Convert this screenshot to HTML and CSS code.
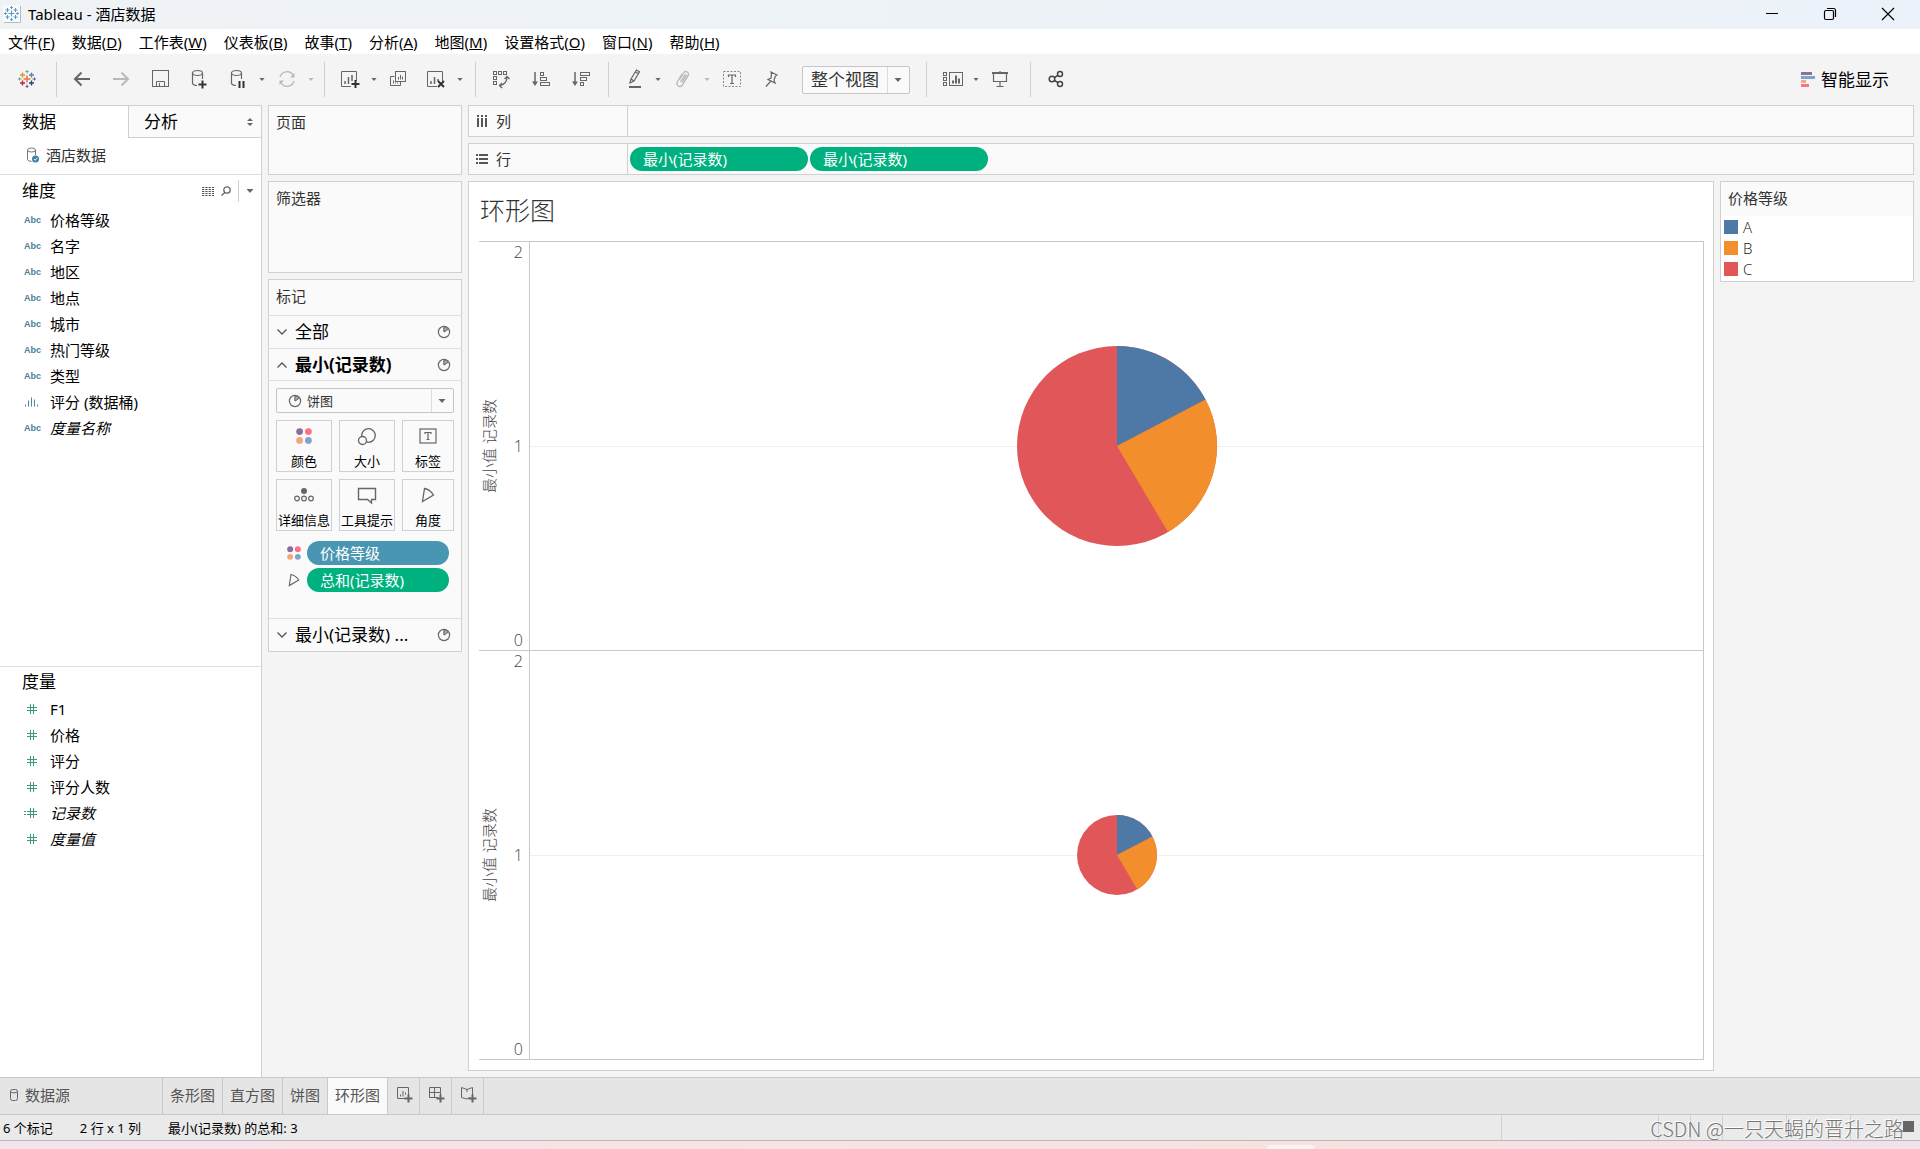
FILE: index.html
```html
<!DOCTYPE html>
<html lang="zh-CN">
<head>
<meta charset="utf-8">
<title>Tableau - 酒店数据</title>
<link rel="stylesheet" href="styles.css">
</head>
<body>
<svg class="sprite" aria-hidden="true">
  <symbol id="caret" viewBox="0 0 8 6"><path d="M0.5 1h7L4 5z" fill="currentColor"/></symbol>
  <symbol id="pie" viewBox="0 0 14 14"><circle cx="7" cy="7" r="5.6" fill="none" stroke="#666" stroke-width="1.2"/><path d="M7 7V2.4M7 7l3.8-2.6" fill="none" stroke="#666"/><path d="M7 7V2a5 5 0 0 1 4 2.3z" fill="#aaa" stroke="#666" stroke-width=".8"/></symbol>
  <symbol id="down" viewBox="0 0 12 8"><path d="M1.500 1.500l4.500 4.500 4.500-4.500" fill="none" stroke="#555" stroke-width="1.300"/></symbol>
  <symbol id="up" viewBox="0 0 12 8"><path d="M1.500 6.500l4.500-4.500 4.500 4.500" fill="none" stroke="#555" stroke-width="1.300"/></symbol>
  <symbol id="dots" viewBox="0 0 16 16"><circle cx="3.6" cy="3.6" r="3.4" fill="#8a6f9e"/><circle cx="12.4" cy="3.6" r="3.4" fill="#fb7185"/><circle cx="3.6" cy="12.4" r="3.4" fill="#f5a67c"/><circle cx="12.4" cy="12.4" r="3.4" fill="#7fa3cc"/></symbol>
  <symbol id="angle" viewBox="0 0 14 16"><path d="M3.5 1.5L1.5 14.5 12.5 8Q9 2.5 3.5 1.5z" fill="none" stroke="#666" stroke-width="1.3"/></symbol>
  <symbol id="hash" viewBox="0 0 16 12"><path d="M6.5 1v10M9.500 1v10M3 4.500h10M3 7.500h10" stroke="#3a9c78" fill="none"/></symbol>
  <symbol id="hasheq" viewBox="-2 0 16 12"><path d="M4.500 1v10M7.500 1v10M1 4.500h10M1 7.500h10M-2 4.500h2M-2 7.500h2" stroke="#3a9c78" fill="none"/></symbol>
</svg>

<header class="titlebar">
  <svg class="app-icon" width="18" height="18" viewBox="0 0 18 18"><rect width="17" height="17" fill="#f8fbfd"/><path d="M17.500 1v16.500H1" fill="none" stroke="#bbb"/><path d="M8.500 5.500v6M5.500 8.500h6M4.500 3v4M2.500 5h4M12.500 3v4M10.500 5h4M4.500 10v4M2.500 12h4M12.500 10v4M10.500 12h4M8.500 1v3M7.200 2.500h2.600M8.500 13v3M7.200 14.500h2.600M1 8.500h3M13 8.500h3M2.500 7.300v2.400M14.500 7.300v2.400" stroke="#5b96bb" fill="none"/></svg>
  <h1 class="app-title">Tableau - 酒店数据</h1>
  <div class="window-buttons">
    <button aria-label="最小化"><svg width="14" height="14"><path d="M1 6.500h12" stroke="#000"/></svg></button>
    <button aria-label="还原"><svg width="14" height="14"><rect x="1.500" y="3.500" width="9" height="9" rx="1.500" fill="none" stroke="#000" stroke-width="1.200"/><path d="M4 1.500h6.500a2 2 0 0 1 2 2V10" fill="none" stroke="#000" stroke-width="1.200"/></svg></button>
    <button aria-label="关闭"><svg width="14" height="14"><path d="M1 1l12 12M13 1L1 13" stroke="#000" stroke-width="1.200"/></svg></button>
  </div>
</header>

<nav class="menubar">
  <button>文件(<u>F</u>)</button><button>数据(<u>D</u>)</button><button>工作表(<u>W</u>)</button><button>仪表板(<u>B</u>)</button><button>故事(<u>T</u>)</button><button>分析(<u>A</u>)</button><button>地图(<u>M</u>)</button><button>设置格式(<u>O</u>)</button><button>窗口(<u>N</u>)</button><button>帮助(<u>H</u>)</button>
</nav>

<div class="toolbar">
  <div class="group group-logo">
    <button class="tool" aria-label="起始页"><svg width="20" height="20" viewBox="0 0 20 20" fill="none"><path d="M10 6.500v7M6.500 10h7" stroke="#e8762d" stroke-width="1.500"/><path d="M5.500 3.500v5M3 6h5" stroke="#eb912c" stroke-width="1.400"/><path d="M14.500 3.500v5M12 6h5" stroke="#5b879b" stroke-width="1.400"/><path d="M5.500 11.500v5M3 14h5" stroke="#c72035" stroke-width="1.400"/><path d="M14.500 11.500v5M12 14h5" stroke="#1f447e" stroke-width="1.400"/><path d="M10 1v3.500M8.500 2.500h3M1 10h3.500M2.500 8.500v3" stroke="#7099a6"/><path d="M10 15.500V19M8.500 17.500h3M15.500 10H19M17.500 8.500v3" stroke="#59659e"/></svg></button>
  </div>
  <div class="group group-file">
    <button class="tool" aria-label="撤消"><svg width="18" height="16" fill="none" stroke="#666" stroke-width="2"><path d="M17 8H2M8.500 1.500L2 8l6.500 6.500"/></svg></button>
    <button class="tool" aria-label="重做"><svg width="18" height="16" fill="none" stroke="#b9b9b9" stroke-width="2"><path d="M1 8h15M9.500 1.500L16 8l-6.500 6.500"/></svg></button>
    <button class="tool" aria-label="保存"><svg width="17" height="17" fill="none" stroke="#666"><rect x=".5" y=".5" width="16" height="16"/><path d="M4.500 16.500v-5h8v5M7.500 13v3.500"/></svg></button>
    <button class="tool" aria-label="新建数据源"><svg width="16" height="20" fill="none" stroke="#666" stroke-width="1.200"><ellipse cx="6.500" cy="4" rx="5" ry="2.500"/><path d="M1.500 4v10.500q1 2 4.500 2M11.500 4v6"/><path d="M11.500 11.500v8M7.500 15.500h8" stroke="#333" stroke-width="2"/></svg></button>
    <div class="split"><button class="tool" aria-label="暂停自动更新"><svg width="16" height="20" fill="none" stroke="#666" stroke-width="1.200"><ellipse cx="6.500" cy="4" rx="5" ry="2.500"/><path d="M1.500 4v10.500q1 2 4.500 2M11.500 4v6"/><path d="M9.500 12v7M13.500 12v7" stroke="#333" stroke-width="2"/></svg></button><button class="arrow" aria-label="更多"><svg width="6" height="5"><use href="#caret"/></svg></button></div>
    <div class="split dim"><button class="tool" aria-label="运行更新"><svg width="18" height="18" fill="none" stroke="#b9b9b9" stroke-width="1.300"><path d="M2 7A7.200 7.200 0 0 1 15 5M16 11A7.200 7.200 0 0 1 3 13"/><path d="M16.500 3v4.500H12zM1.500 15v-4.500H6z" fill="#b9b9b9" stroke="none"/></svg></button><button class="arrow" aria-label="更多"><svg width="6" height="5"><use href="#caret"/></svg></button></div>
  </div>
  <div class="group group-sheet">
    <div class="split"><button class="tool" aria-label="新建工作表"><svg width="20" height="18" fill="none" stroke="#666"><path d="M11 16.500H1.500V1.500h15V11"/><path d="M5 14v-3M8.500 14V7M12 11V5" stroke-width="1.500"/><path d="M15.500 10v8M11.500 14h8" stroke="#333" stroke-width="2"/></svg></button><button class="arrow" aria-label="更多"><svg width="6" height="5"><use href="#caret"/></svg></button></div>
    <button class="tool" aria-label="复制"><svg width="18" height="18" fill="none" stroke="#666"><path d="M5.500 6.500h-4v9h10v-4"/><rect x="6.500" y="1.500" width="10" height="10"/><path d="M9.500 9.500V7M11.500 9.500V5M13.500 9.500V6.500M4.500 13.500v-3M6.500 13.500v-1M8.500 13.500v-1"/></svg></button>
    <div class="split"><button class="tool" aria-label="清除工作表"><svg width="20" height="18" fill="none" stroke="#666"><path d="M11 16.500H1.500V1.500h15V11"/><path d="M5 14v-3M8.500 14V7M12 11V9" stroke-width="1.500"/><path d="M12 11l6 6M18 11l-6 6" stroke="#333" stroke-width="2"/></svg></button><button class="arrow" aria-label="更多"><svg width="6" height="5"><use href="#caret"/></svg></button></div>
  </div>
  <div class="group group-sort">
    <button class="tool" aria-label="交换行和列"><svg width="18" height="18" fill="none" stroke="#666"><rect x="1.500" y="1.500" width="3" height="3"/><rect x="6.500" y="1.500" width="3" height="3"/><rect x="11.500" y="1.500" width="3" height="3"/><rect x="1.500" y="6.500" width="3" height="3"/><rect x="1.500" y="11.500" width="3" height="3"/><path d="M15 7q0 7-7 8.500" stroke-width="1.300"/><path d="M12.500 9L15 6.500 17.500 9M10 13l-2.500 2.500L10 18" stroke-width="1.300"/></svg></button>
    <button class="tool" aria-label="升序排序"><svg width="18" height="16" fill="none" stroke="#666"><path d="M3 1v11" stroke-width="1.500"/><path d="M0 10.500h6L3 15z" fill="#666" stroke="none"/><rect x="8.500" y="1.500" width="3" height="3"/><rect x="8.500" y="6.500" width="6" height="3"/><rect x="8.500" y="11.500" width="9" height="3"/></svg></button>
    <button class="tool" aria-label="降序排序"><svg width="18" height="16" fill="none" stroke="#666"><path d="M3 1v11" stroke-width="1.500"/><path d="M0 10.500h6L3 15z" fill="#666" stroke="none"/><rect x="8.500" y="1.500" width="9" height="3"/><rect x="8.500" y="6.500" width="6" height="3"/><rect x="8.500" y="11.500" width="3" height="3"/></svg></button>
  </div>
  <div class="group group-view">
    <div class="split"><button class="tool" aria-label="突出显示"><svg width="16" height="20" fill="none" stroke="#666" stroke-width="1.200"><path d="M4 14l1-4 5.500-9 3 1.800L8 12zM5 10l3 2M9.500 3l3 1.800"/><path d="M3 18h12" stroke-width="2"/></svg></button><button class="arrow" aria-label="更多"><svg width="6" height="5"><use href="#caret"/></svg></button></div>
    <div class="split dim"><button class="tool" aria-label="组成员"><svg width="16" height="18" fill="none" stroke="#b9b9b9" stroke-width="1.300"><path d="M4.500 9.500L8.500 3a2.600 2.600 0 0 1 4.600 2.700L7 15.500a3 3 0 0 1-5-3L7 4M5.500 12l4-6.500q1-1.200 1.800 0L7 12.500"/></svg></button><button class="arrow" aria-label="更多"><svg width="6" height="5"><use href="#caret"/></svg></button></div>
    <button class="tool" aria-label="显示标记标签"><svg width="18" height="16" fill="none" stroke="#888"><rect x=".5" y=".5" width="17" height="15" stroke-dasharray="2 1.500"/><path d="M5.500 6V4h7v2M9 4v8.500M7 12.500h4" stroke="#666" stroke-width="1.200"/></svg></button>
    <button class="tool" aria-label="固定轴"><svg width="14" height="16" fill="none" stroke="#666" stroke-width="1.200"><path d="M7 1l6 3-1.500 1L10 9l1 3-7-3.500 3-1.500L7.500 3zM6.500 10.500L2 15.500"/></svg></button>
    <div class="combo combo-fit"><select aria-label="适合"><option>整个视图</option></select><svg width="8" height="6"><use href="#caret"/></svg></div>
  </div>
  <div class="group group-cards">
    <div class="split"><button class="tool" aria-label="显示/隐藏卡"><svg width="21" height="16" fill="none" stroke="#666"><rect x="1.500" y="1.500" width="3" height="3"/><rect x="1.500" y="6.500" width="3" height="3"/><rect x="1.500" y="11.500" width="3" height="3"/><rect x="7.500" y="1.500" width="13" height="13"/><path d="M11 12.500V9.500M14 12.500V4.500M17 12.500v-5" stroke-width="2"/></svg></button><button class="arrow" aria-label="更多"><svg width="6" height="5"><use href="#caret"/></svg></button></div>
    <button class="tool" aria-label="演示模式"><svg width="18" height="18" fill="none" stroke="#666"><path d="M1 3h16" stroke-width="2"/><path d="M2.500 3v8.500h13V3M9 1v1M9 11.500v5M5.500 16.500h7" stroke-width="1.200"/></svg></button>
  </div>
  <div class="group">
    <button class="tool" aria-label="共享"><svg width="16" height="18" fill="none" stroke="#444" stroke-width="1.500"><circle cx="4" cy="9" r="2.800"/><circle cx="12" cy="4" r="2.500"/><circle cx="12" cy="14" r="2.500"/><path d="M6.500 7.500L10 5.300M6.500 10.500L10 12.700"/></svg></button>
  </div>
  <button class="show-me"><svg width="14" height="16"><path d="M0 1.500h11" stroke="#8a739b" stroke-width="3"/><path d="M0 5.500h14" stroke="#7fa3cc" stroke-width="3"/><path d="M0 9.500h5" stroke="#f5a67c" stroke-width="3"/><path d="M0 13.500h8" stroke="#fb7185" stroke-width="3"/></svg>智能显示</button>
</div>

<main class="workspace">
  <aside class="sidebar">
    <div class="side-tabs"><button class="side-tab active">数据</button><button class="side-tab">分析<svg width="6" height="10"><path d="M0 4l3-3 3 3zM0 6l3 3 3-3z" fill="#666"/></svg></button></div>
    <button class="source"><svg width="13" height="16" fill="none" stroke="#777"><path d="M1.500 3v9.500q1 2 4 2M9.500 3v5"/><ellipse cx="5.500" cy="3" rx="4" ry="2"/><circle cx="9.500" cy="12" r="3.500" fill="#3d7fa6" stroke="none"/><path d="M7.800 12l1.400 1.400 2-2.600" stroke="#fff"/></svg>酒店数据</button>
    <div class="fields">
      <section class="field-pane">
        <header class="pane-head"><h2>维度</h2>
          <div class="pane-tools"><button aria-label="视图"><svg width="12" height="9" stroke="#555"><path d="M0 .5h12M0 2.500h12M0 4.500h12M0 6.500h12M0 8.500h12" stroke-dasharray="2.300 1"/></svg></button><button aria-label="查找"><svg width="10" height="10" fill="none" stroke="#666" stroke-width="1.300"><circle cx="6" cy="4" r="3.200"/><path d="M4 6.500L.5 9.500"/></svg></button><button class="pane-menu" aria-label="菜单"><svg width="8" height="6"><use href="#caret"/></svg></button></div>
        </header>
        <ul class="field-list">
          <li><span class="abc">Abc</span>价格等级</li>
          <li><span class="abc">Abc</span>名字</li>
          <li><span class="abc">Abc</span>地区</li>
          <li><span class="abc">Abc</span>地点</li>
          <li><span class="abc">Abc</span>城市</li>
          <li><span class="abc">Abc</span>热门等级</li>
          <li><span class="abc">Abc</span>类型</li>
          <li><svg width="16" height="10" stroke="#4a87a3"><path d="M1.500 7.500v2M4.500 3.500v6M7.500 .5v9M10.500 2.500v7M13.500 7.500v2"/></svg>评分 (数据桶)</li>
          <li class="generated"><span class="abc">Abc</span>度量名称</li>
        </ul>
      </section>
      <section class="field-pane measures">
        <header class="pane-head"><h2>度量</h2></header>
        <ul class="field-list">
          <li><svg width="16" height="12"><use href="#hash"/></svg>F1</li>
          <li><svg width="16" height="12"><use href="#hash"/></svg>价格</li>
          <li><svg width="16" height="12"><use href="#hash"/></svg>评分</li>
          <li><svg width="16" height="12"><use href="#hash"/></svg>评分人数</li>
          <li class="generated"><svg width="16" height="12"><use href="#hasheq"/></svg>记录数</li>
          <li class="generated"><svg width="16" height="12"><use href="#hash"/></svg>度量值</li>
        </ul>
      </section>
    </div>
  </aside>

  <div class="cards">
    <section class="card card-pages"><h2>页面</h2></section>
    <section class="card card-filters"><h2>筛选器</h2></section>
    <section class="card card-marks">
      <h2>标记</h2>
      <button class="mark-row"><svg width="12" height="8"><use href="#down"/></svg><span>全部</span><svg width="14" height="14"><use href="#pie"/></svg></button>
      <button class="mark-row current"><svg width="12" height="8"><use href="#up"/></svg><span>最小(记录数)</span><svg width="14" height="14"><use href="#pie"/></svg></button>
      <div class="mark-body">
        <div class="combo combo-type"><svg class="combo-icon" width="14" height="14"><use href="#pie"/></svg><select aria-label="标记类型"><option>饼图</option></select><svg width="8" height="6"><use href="#caret"/></svg></div>
        <div class="mark-grid">
          <button><svg width="16" height="16"><use href="#dots"/></svg>颜色</button>
          <button><svg width="20" height="18" fill="none" stroke="#666" stroke-width="1.300"><circle cx="11.500" cy="7.500" r="6.800"/><circle cx="5.500" cy="12.500" r="4" fill="#fafafa"/></svg>大小</button>
          <button><svg width="18" height="16" fill="none" stroke="#666" stroke-width="1.200"><rect x="1" y="1" width="16" height="14"/><path d="M6 6V4.500h6V6M9 4.500v7M7.500 11.500h3"/></svg>标签</button>
          <button><svg width="20" height="16" fill="none" stroke="#666" stroke-width="1.200"><circle cx="10" cy="4" r="3" fill="#666" stroke="none"/><circle cx="3" cy="11.500" r="2.300"/><circle cx="10" cy="11.500" r="2.300"/><circle cx="17" cy="11.500" r="2.300"/></svg>详细信息</button>
          <button><svg width="20" height="18" fill="none" stroke="#666" stroke-width="1.400"><path d="M1.500 1.500h17v11h-4v3.500l-4-3.500h-9z"/></svg>工具提示</button>
          <button><svg width="14" height="16"><use href="#angle"/></svg>角度</button>
        </div>
        <div class="encodings">
          <div class="encoding"><svg width="14" height="14"><use href="#dots"/></svg><button class="pill blue">价格等级</button></div>
          <div class="encoding"><svg width="12" height="14"><use href="#angle"/></svg><button class="pill">总和(记录数)</button></div>
        </div>
      </div>
      <button class="mark-row last"><svg width="12" height="8"><use href="#down"/></svg><span>最小(记录数) ...</span><svg width="14" height="14"><use href="#pie"/></svg></button>
    </section>
  </div>

  <div class="stage">
    <div class="shelf"><div class="shelf-name"><svg width="12" height="12" stroke="#555" stroke-width="2"><path d="M2 0v2M2 3v9M6 0v2M6 3v9M10 0v2M10 3v9"/></svg>列</div></div>
    <div class="shelf"><div class="shelf-name"><svg width="12" height="12" stroke="#555" stroke-width="2"><path d="M0 2h2M3 2h9M0 6h2M3 6h9M0 10h2M3 10h9"/></svg>行</div><button class="pill">最小(记录数)</button><button class="pill">最小(记录数)</button></div>
    <div class="view">
      <section class="canvas">
        <h2 class="sheet-title">环形图</h2>
        <div class="chart">
          <div class="band">
            <div class="axis"><span class="axis-title">最小值 记录数</span><div class="ticks"><span>2</span><span>1</span><span>0</span></div></div>
            <div class="plot"><svg width="200" height="200" viewBox="-100 -100 200 200"><circle r="100" fill="#e15759"/><path d="M0 0V-100A100 100 0 0 1 88.500 -46.500z" fill="#4e79a7"/><path d="M0 0L88.500 -46.500A100 100 0 0 1 51 86z" fill="#f28e2b"/></svg></div>
          </div>
          <div class="band">
            <div class="axis"><span class="axis-title">最小值 记录数</span><div class="ticks"><span>2</span><span>1</span><span>0</span></div></div>
            <div class="plot"><svg width="80" height="80" viewBox="-100 -100 200 200"><circle r="100" fill="#e15759"/><path d="M0 0V-100A100 100 0 0 1 88.500 -46.500z" fill="#4e79a7"/><path d="M0 0L88.500 -46.500A100 100 0 0 1 51 86z" fill="#f28e2b"/></svg></div>
          </div>
        </div>
      </section>
      <aside class="legend">
        <h2>价格等级</h2>
        <ul><li><i class="swatch a"></i>A</li><li><i class="swatch b"></i>B</li><li><i class="swatch c"></i>C</li></ul>
      </aside>
    </div>
  </div>
</main>

<nav class="sheet-tabs">
  <button class="data-source"><svg width="8" height="12" fill="none" stroke="#666"><rect x=".5" y=".5" width="7" height="11" rx="2"/><path d="M.5 3q3.500 2 7 0"/></svg>数据源</button>
  <button>条形图</button><button>直方图</button><button>饼图</button><button class="active">环形图</button>
  <button class="add" aria-label="新建工作表"><svg width="16" height="16" fill="none" stroke="#666"><path d="M9 11.500H.5V.5h11V8M3.500 9.500v-2M6 9.500V4M8.500 7.500v-2"/><path d="M11.500 7.500v8M7.500 11.500h8" stroke-width="2"/></svg></button>
  <button class="add" aria-label="新建仪表板"><svg width="16" height="16" fill="none" stroke="#666"><path d="M9 10.500H.5V.5h11V8M5.500 .5v10M.5 5.500h11"/><path d="M11.500 7.500v8M7.500 11.500h8" stroke-width="2"/></svg></button>
  <button class="add" aria-label="新建故事"><svg width="16" height="16" fill="none" stroke="#666"><path d="M9 10.500L6 12 .5 10.500V.5L6 2.500l5.500-2V8M6 2.500V5"/><path d="M11.500 7.500v8M7.500 11.500h8" stroke-width="2"/></svg></button>
</nav>
<footer class="status">
  <span class="marks-count">6 个标记</span><span class="size-count">2 行 x 1 列</span><span class="sum">最小(记录数) 的总和: 3</span>
  <div class="status-cells"><i class="cell-wide"></i><i></i><i></i><i class="cell-mid"></i><i class="cell-mid"></i><i class="cell-end"></i></div>
  <span class="watermark">CSDN @一只天蝎的晋升之路</span>
  <b class="view-square"></b>
</footer>
<div class="desktop-edge"><i></i></div>
</body>
</html>
```
FILE: styles.css
```css
* { box-sizing: border-box; margin: 0; padding: 0; }

body {
  min-height: 100vh;
  display: flex;
  flex-direction: column;
  font: 15px/20px "Noto Sans", "Noto Sans CJK SC", sans-serif;
  color: #000;
  background: #f4f4f4;
}

button, select { font: inherit; color: inherit; background: none; border: 0; white-space: nowrap; }
h1, h2 { font-size: 15px; font-weight: 400; }
ul { list-style: none; }
svg { flex: none; display: block; overflow: visible; }
.sprite { position: absolute; width: 0; height: 0; }

/* Window frame */
.titlebar { height: 29px; display: flex; align-items: center; padding: 0 8px 2px 3px; background: linear-gradient(90deg, #eff3f6, #ecf2f9); }
.app-title { margin-left: 7px; flex: 1; }
.window-buttons { display: flex; }
.window-buttons button { width: 58px; height: 27px; display: grid; place-items: center; }
.window-buttons button:last-child { margin-right: -5px; }

.menubar { height: 25px; display: flex; align-items: center; gap: 17px; padding-left: 8px; background: #fff; }

/* Toolbar */
.toolbar { height: 51px; display: flex; align-items: center; padding-right: 31px; }
.group { height: 35px; display: flex; align-items: center; gap: 14px; padding-left: 13px; border-left: 1px solid #d0d0d0; color: #666; }
.group-logo { border: 0; padding-left: 15px; flex: 0 0 56px; }
.group-file { gap: 15px; flex: 0 0 268px; }
.group-sheet { flex: 0 0 151px; }
.group-sort { gap: 16px; flex: 0 0 133px; }
.group-view { gap: 15px; flex: 0 0 318px; }
.group-cards { flex: 0 0 104px; }
.tool { width: 24px; height: 28px; display: flex; align-items: center; justify-content: center; padding-bottom: 2px; }
.split { display: flex; align-items: center; gap: 8px; margin-right: -6px; }
.arrow { width: 8px; display: flex; justify-content: center; }
.dim { color: #b9b9b9; }
.show-me { margin-left: auto; display: flex; align-items: center; gap: 6px; font-size: 17px; }

.combo { display: grid; align-items: center; border: 1px solid #c6c6c6; border-radius: 2px; color: #666; background: #fafafa; }
.combo select { grid-area: 1 / 1 / 2 / 3; appearance: none; width: 100%; color: #333; }
.combo > svg:last-child { grid-area: 1 / 2; justify-self: center; pointer-events: none; }
.combo::after { content: ""; grid-area: 1 / 2; height: 100%; border-left: 1px solid #dcdcdc; pointer-events: none; }
.combo-fit { width: 108px; height: 28px; margin-left: 4px; grid-template: 26px / 84px 22px; }
.combo-fit select { height: 26px; padding-left: 8px; font-size: 17px; }
.combo-type { height: 25px; grid-template: 23px / 1fr 22px; }
.combo-type select { height: 23px; padding-left: 30px; font-size: 13px; }
.combo-icon { grid-area: 1 / 1; margin-left: 11px; }

/* Workspace columns */
.workspace { flex: 1; display: flex; gap: 6px; padding-right: 6px; }

.sidebar { flex: 0 0 262px; display: flex; flex-direction: column; background: #fff; border: solid #d0d0d0; border-width: 1px 1px 0 0; }
.side-tabs { height: 32px; display: flex; }
.side-tab { flex: 1; display: flex; align-items: center; justify-content: space-between; padding: 0 8px 0 15px; font-size: 17px; background: #fafafa; border: solid #d0d0d0; border-width: 0 0 1px 1px; }
.side-tab.active { flex: 0 0 128px; padding-left: 22px; background: #fff; border: 0; }
.source { height: 37px; display: flex; align-items: center; gap: 7px; padding: 0 0 2px 26px; color: #333; border-bottom: 1px solid #e0e0e0; }
.fields { flex: 1; display: grid; grid-template-rows: 49fr 41fr; }
.measures { border-top: 1px solid #e0e0e0; }
.pane-head { height: 32px; display: flex; align-items: center; justify-content: space-between; padding-left: 22px; }
.measures .pane-head { height: 29px; }
.pane-head h2 { font-size: 17px; }
.pane-tools { display: flex; align-items: center; color: #666; gap: 7px; }
.pane-menu { height: 22px; width: 23px; display: grid; place-items: center; border-left: 1px solid #d0d0d0; }
.field-list li { height: 26px; display: flex; align-items: center; gap: 10px; padding-left: 24px; }
.abc { width: 16px; font: bold 9px/12px "Liberation Sans", sans-serif; color: #4a7f96; }
.generated { font-style: italic; }
.generated .abc { font-style: normal; }

/* Cards */
.cards { flex: 0 0 194px; display: flex; flex-direction: column; gap: 6px; }
.card, .shelf, .canvas, .legend { border: 1px solid #d0d0d0; background: #fafafa; }
.card h2 { height: 35px; padding: 6px 7px; color: #333; }
.card-pages { height: 70px; }
.card-filters { height: 92px; }
.mark-row { width: 100%; height: 33px; display: flex; align-items: center; padding: 0 10px 0 7px; border-top: 1px solid #e0e0e0; font-size: 17px; text-align: left; }
.mark-row span { flex: 1; padding-left: 7px; }
.mark-row.current { height: 32px; font-weight: 700; }
.mark-body { border-top: 1px solid #e0e0e0; padding: 7px; }
.mark-grid { display: grid; grid-template: 52px 52px / 56px 56px 52px; gap: 7px; margin-top: 7px; }
.mark-grid button { display: flex; flex-direction: column; align-items: center; justify-content: space-between; padding-top: 7px; font-size: 13px; border: 1px solid #d0d0d0; }
.encodings { display: grid; gap: 3px; padding: 10px 5px 19px 10px; }
.encoding { display: grid; grid-template-columns: 16px 142px; justify-content: space-between; align-items: center; justify-items: center; }

.pill { width: 100%; height: 24px; padding: 0 13px; border-radius: 12px; background: #00b180; color: #fff; text-align: left; }
.pill.blue { background: #4996b2; }

/* Shelves and view */
.stage { flex: 1; min-width: 0; display: flex; flex-direction: column; gap: 6px; padding-bottom: 6px; }
.shelf { height: 32px; display: flex; align-items: center; gap: 2px; }
.shelf .pill { width: 178px; }
.shelf-name { width: 159px; height: 30px; display: flex; align-items: center; gap: 8px; padding-left: 7px; color: #333; border-right: 1px solid #d0d0d0; }
.view { flex: 1; display: flex; align-items: flex-start; gap: 6px; }
.canvas { flex: 1; align-self: stretch; display: flex; flex-direction: column; padding: 0 9px 10px 10px; background: #fff; }
.sheet-title { height: 59px; padding: 13px 1px; font: 300 25px/28px "Noto Sans CJK SC", sans-serif; color: #333; }
.chart { flex: 1; display: flex; flex-direction: column; border-top: 1px solid #c8c8c8; }
.band { flex: 1; display: flex; border-bottom: 1px solid #c8c8c8; }
.axis { flex: 0 0 50px; display: flex; align-items: center; justify-content: space-between; padding-right: 6px; }
.axis-title { writing-mode: vertical-rl; text-orientation: sideways; transform: rotate(180deg); font-weight: 300; color: #444; }
.ticks { align-self: stretch; display: flex; flex-direction: column; justify-content: space-between; font: 300 16px/20px "Open Sans", sans-serif; color: #444; }
.plot { flex: 1; display: grid; place-items: center; border: solid #c8c8c8; border-width: 0 1px; background: linear-gradient(#f0f0f0, #f0f0f0) center / 100% 1px no-repeat; }
.legend { flex: 0 0 194px; background: #fff; }
.legend h2 { height: 34px; padding: 6px 7px; color: #333; background: #fafafa; }
.legend ul { padding-bottom: 2px; }
.legend li { height: 21px; display: flex; align-items: center; gap: 5px; padding-left: 3px; font: 300 15px/20px "Open Sans", sans-serif; color: #111; }
.swatch { width: 14px; height: 14px; }
.a { background: #4e79a7; }
.b { background: #f28e2b; }
.c { background: #e15759; }

/* Sheet tabs and status */
.sheet-tabs { height: 37px; display: flex; background: #e5e5e5; border-top: 1px solid #c8c8c8; color: #555; }
.sheet-tabs button { display: flex; align-items: center; padding: 0 7px 2px; border-right: 1px solid #c8c8c8; }
.sheet-tabs .data-source { width: 163px; gap: 7px; padding-left: 10px; }
.sheet-tabs .active { background: #fafafa; }
.sheet-tabs .add { width: 32px; padding-left: 9px; }
.status { position: relative; height: 27px; display: flex; align-items: center; padding: 0 6px 0 3px; font-size: 13px; background: #eaeaea; border: solid #c8c8c8; border-width: 1px 0; border-bottom-color: #bdb5b8; }
.size-count { margin-left: 27px; }
.sum { margin-left: 27px; flex: 1; }
.status-cells { align-self: stretch; display: flex; margin-right: 42px; }
.status-cells i { width: 32px; border-left: 1px solid #d0d0d0; }
.status-cells .cell-wide { width: 157px; }
.status-cells .cell-mid { width: 64px; }
.status-cells .cell-end { width: 11px; }
.watermark { position: absolute; right: 16px; top: 0; font: 300 20px/28px "Noto Sans CJK SC", sans-serif; color: #777; text-shadow: -1px -1px #fff; white-space: nowrap; }
.view-square { width: 11px; height: 11px; margin-bottom: 3px; background: #666; }
.desktop-edge { height: 8px; display: flex; align-items: flex-end; background: linear-gradient(90deg, #f3e3ee, #f7e3e1 40%, #f7e2e0 70%, #f1e1ec); }
.desktop-edge i { width: 48px; height: 4px; margin-left: 66%; border-radius: 4px 4px 0 0; background: #faf3f3; }
```
